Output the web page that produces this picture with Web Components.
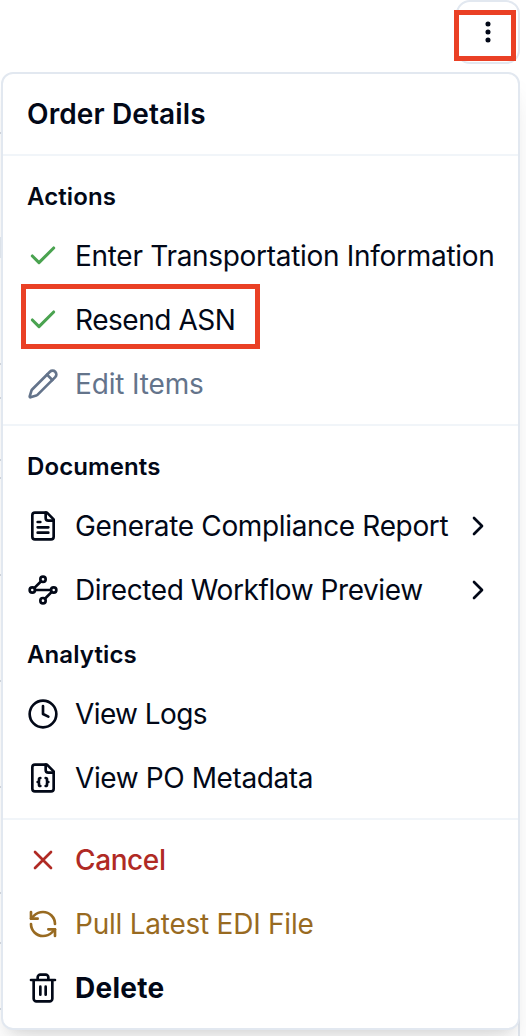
<!DOCTYPE html>
<html lang="en">
<head>
<meta charset="utf-8">
<title>Order Details</title>
<style>
    body {
        margin: 0;
        background: #fff;
        font-family: Inter, "Liberation Sans", sans-serif;
        color: #020817;
        overflow: hidden;
    }
</style>
</head>
<body>
<order-page>
    <menu-trigger slot="trigger"></menu-trigger>
    <order-menu heading="Order Details">
        <menu-group>
            <menu-label>Actions</menu-label>
            <menu-item icon="check" tone="success">Enter Transportation Information</menu-item>
            <menu-item icon="check" tone="success" marked style="--tracking: -0.45px">Resend ASN</menu-item>
            <menu-item icon="pencil" tone="muted" style="--tracking: -0.15px">Edit Items</menu-item>
        </menu-group>
        <menu-group>
            <menu-label>Documents</menu-label>
            <menu-item icon="file-text" submenu style="--tracking: -0.35px">Generate Compliance Report</menu-item>
            <menu-item icon="waypoints" submenu style="--tracking: -0.42px">Directed Workflow Preview</menu-item>
            <menu-label>Analytics</menu-label>
            <menu-item icon="clock" style="--tracking: -0.6px">View Logs</menu-item>
            <menu-item icon="file-json" style="--tracking: -0.4px">View PO Metadata</menu-item>
        </menu-group>
        <menu-group>
            <menu-item icon="x" tone="danger" style="--tracking: -0.4px">Cancel</menu-item>
            <menu-item icon="refresh" tone="warning" style="--tracking: -0.24px">Pull Latest EDI File</menu-item>
            <menu-item icon="trash" tone="strong" style="--tracking: 0.25px">Delete</menu-item>
        </menu-group>
    </order-menu>
</order-page>

<script>
const ICONS = {
    'check': '<path stroke-width="2.3" d="M20 6 9 17l-5-5"/>',
    'pencil': '<path d="M21.174 6.812a1 1 0 0 0-3.986-3.987L3.842 16.174a2 2 0 0 0-.5.83l-1.321 4.352a.5.5 0 0 0 .623.622l4.353-1.32a2 2 0 0 0 .83-.497z"/><path d="m15 5 4 4"/>',
    'file-text': '<path d="M15 2H6a2 2 0 0 0-2 2v16a2 2 0 0 0 2 2h12a2 2 0 0 0 2-2V7Z"/><path d="M14 2v4a2 2 0 0 0 2 2h4M10 9H8M16 13H8M16 17H8"/>',
    'waypoints': '<path d="m10.586 5.414-5.172 5.172M18.586 13.414l-5.172 5.172M6 12h12"/><circle cx="12" cy="20" r="2"/><circle cx="12" cy="4" r="2"/><circle cx="20" cy="12" r="2"/><circle cx="4" cy="12" r="2"/>',
    'clock': '<circle cx="12" cy="12" r="10"/><path d="M12 6v6l4 2"/>',
    'file-json': '<path d="M15 2H6a2 2 0 0 0-2 2v16a2 2 0 0 0 2 2h12a2 2 0 0 0 2-2V7Z"/><path d="M14 2v4a2 2 0 0 0 2 2h4"/><path d="M10 12a1 1 0 0 0-1 1v1a1 1 0 0 1-1 1 1 1 0 0 1 1 1v1a1 1 0 0 0 1 1"/><path d="M14 18a1 1 0 0 0 1-1v-1a1 1 0 0 1 1-1 1 1 0 0 1-1-1v-1a1 1 0 0 0-1-1"/>',
    'x': '<path d="M18 6 6 18M6 6l12 12"/>',
    'refresh': '<path d="M21 12a9 9 0 0 0-9-9 9.75 9.75 0 0 0-6.74 2.74L3 8"/><path d="M3 3v5h5"/><path d="M3 12a9 9 0 0 0 9 9 9.75 9.75 0 0 0 6.74-2.74L21 16"/><path d="M16 16h5v5"/>',
    'trash': '<path d="M3 6h18M19 6v14c0 1-1 2-2 2H7c-1 0-2-1-2-2V6M8 6V4c0-1 1-2 2-2h4c1 0 2 1 2 2v2M10 11v6M14 11v6"/>',
    'chevron': '<path d="m9 18 6-6-6-6"/>',
    'dots': '<g fill="currentColor" stroke-width="1.8"><circle cx="12" cy="12" r="1"/><circle cx="12" cy="6" r="1"/><circle cx="12" cy="18" r="1"/></g>'
};

function icon(name) {
    return `<svg viewBox="0 0 24 24" width="32" height="32" fill="none" stroke="currentColor" stroke-width="2" stroke-linecap="round" stroke-linejoin="round">${ICONS[name]}</svg>`;
}

// row borders of the table that the menu covers
const ROW_LINES = [132, 363, 397, 459, 477, 574, 680, 786, 892, 942, 1008];

class OrderPage extends HTMLElement {
    constructor() {
        super();
        const lines = ROW_LINES.map(y => `linear-gradient(#d5dae2, #d5dae2) 0 ${y}px / 1px 2px no-repeat`);
        this.attachShadow({mode: 'open'}).innerHTML = `
        <style>
        :host {
            display: flex;
            flex-direction: column;
            height: 1036px;
            box-sizing: border-box;
            padding: 0 6px 0 1px;
            background:
                ${lines.join(',')},
                linear-gradient(#e5ebf2, #e5ebf2) 0 237px / 1px 21px no-repeat,
                linear-gradient(#e2e8f0, #e2e8f0) 518px 1000px / 2px 36px no-repeat,
                #fff;
        }
        header {
            display: flex;
            justify-content: flex-end;
            height: 72px;
        }
        </style>
        <header><slot name="trigger"></slot></header>
        <slot></slot>`;
    }
}

class MenuTrigger extends HTMLElement {
    constructor() {
        super();
        this.attachShadow({mode: 'open'}).innerHTML = `
        <style>
        :host {
            display: block;
            position: relative;
            width: 64px;
            height: 64px;
        }
        button {
            display: flex;
            align-items: center;
            justify-content: center;
            width: 100%;
            height: 100%;
            padding: 0;
            border: 2px solid #e2e8f0;
            border-radius: 14px;
            background: #fff;
            color: inherit;
        }
        .mark {
            position: absolute;
            left: -2px;
            top: 10px;
            width: 62px;
            height: 51px;
            box-sizing: border-box;
            border: 5px solid #ea4025;
        }
        </style>
        <button aria-label="Open menu">${icon('dots')}</button>
        <div class="mark"></div>`;
    }
}

class OrderMenu extends HTMLElement {
    constructor() {
        super();
        this.attachShadow({mode: 'open'});
    }

    connectedCallback() {
        this.shadowRoot.innerHTML = `
        <style>
        :host {
            display: block;
            box-sizing: border-box;
            height: 958px;
            border: 2px solid #e2e8f0;
            border-radius: 12px;
            background: #fff;
            box-shadow: 0 20px 30px -6px rgba(0,0,0,.1), 0 8px 12px -8px rgba(0,0,0,.1);
        }
        h1 {
            margin: 0;
            padding: 0 24px;
            font-size: 28px;
            font-weight: 600;
            line-height: 80px;
            letter-spacing: 0.12px;
        }
        </style>
        <h1>${this.getAttribute('heading')}</h1>
        <slot></slot>`;
    }
}

class MenuGroup extends HTMLElement {
    constructor() {
        super();
        this.attachShadow({mode: 'open'}).innerHTML = `
        <style>
        :host {
            display: block;
            padding: 8px 0;
            border-top: 2px solid #f1f5f9;
        }
        </style>
        <slot></slot>`;
    }
}

class MenuLabel extends HTMLElement {
    constructor() {
        super();
        this.attachShadow({mode: 'open'}).innerHTML = `
        <style>
        :host {
            display: block;
            padding: 5px 24px 0;
            height: 55px;
            font-size: 24px;
            font-weight: 600;
            line-height: 56px;
            letter-spacing: 0.1px;
        }
        </style>
        <slot></slot>`;
    }
}

class MenuItem extends HTMLElement {
    constructor() {
        super();
        this.attachShadow({mode: 'open'});
    }

    connectedCallback() {
        this.shadowRoot.innerHTML = `
        <style>
        :host {
            display: flex;
            align-items: center;
            position: relative;
            height: 64px;
            padding: 0 24px;
            font-size: 28px;
            letter-spacing: var(--tracking, -0.3px);
            white-space: nowrap;
        }
        svg {
            flex: none;
            margin-right: 16px;
        }
        .chevron {
            display: flex;
            margin-left: auto;
        }
        .chevron svg {
            margin: 0;
        }
        :host([tone="success"]) > svg, svg.success { color: #4aa350; }
        :host([tone="muted"]) { color: #64748b; }
        :host([tone="danger"]) { color: #b02a24; font-weight: 500; }
        :host([tone="warning"]) { color: #986a21; }
        :host([tone="strong"]) { font-weight: 700; }
        .mark {
            position: absolute;
            left: 18px;
            top: -4px;
            width: 239px;
            height: 65px;
            box-sizing: border-box;
            border: 5px solid #ea4025;
        }
        </style>
        ${icon(this.getAttribute('icon'))}
        <span><slot></slot></span>
        ${this.hasAttribute('submenu') ? `<div class="chevron">${icon('chevron')}</div>` : ''}
        ${this.hasAttribute('marked') ? '<div class="mark"></div>' : ''}`;
    }
}

customElements.define('order-page', OrderPage);
customElements.define('menu-trigger', MenuTrigger);
customElements.define('order-menu', OrderMenu);
customElements.define('menu-group', MenuGroup);
customElements.define('menu-label', MenuLabel);
customElements.define('menu-item', MenuItem);
</script>
</body>
</html>
